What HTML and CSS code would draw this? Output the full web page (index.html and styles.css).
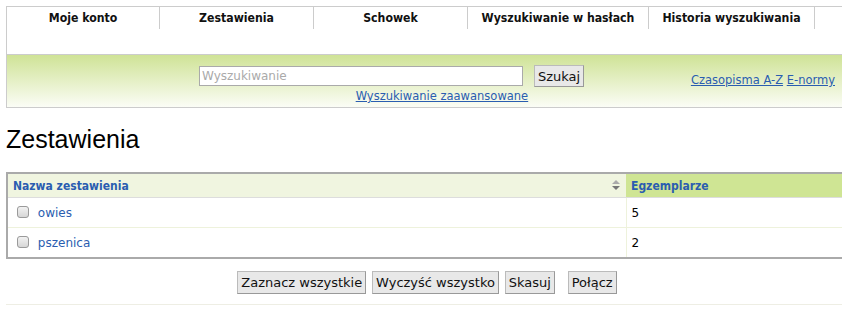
FILE: index.html
```html
<!DOCTYPE html>
<html lang="pl">
<head>
  <meta charset="UTF-8" />
  <title>Zestawienia</title>
  <link rel="stylesheet" href="styles.css">
</head>
<body>
  <div class="page">
    <div class="top">
      <ul class="menu">
        <li class="m1">Moje konto</li>
        <li class="m2">Zestawienia</li>
        <li class="m3">Schowek</li>
        <li class="m4">Wyszukiwanie w hasłach</li>
        <li class="m5">Historia wyszukiwania</li>
      </ul>
      <div class="search-band">
        <form class="search-form" onsubmit="return false">
          <div class="search-row">
            <input type="text" class="search-input" placeholder="Wyszukiwanie" />
            <button type="submit" class="btn">Szukaj</button>
          </div>
          <a href="#" class="adv-link">Wyszukiwanie zaawansowane</a>
        </form>
        <div class="extra-links">
          <a href="#">Czasopisma A-Z</a> <a href="#">E-normy</a>
        </div>
      </div>
    </div>

    <h1>Zestawienia</h1>

    <table class="lists">
      <thead>
        <tr>
          <th class="col-name">Nazwa zestawienia <span class="sort"></span></th>
          <th class="col-count">Egzemplarze</th>
        </tr>
      </thead>
      <tbody>
        <tr>
          <td><input type="checkbox" /> <a href="#">owies</a></td>
          <td>5</td>
        </tr>
        <tr>
          <td><input type="checkbox" /> <a href="#">pszenica</a></td>
          <td>2</td>
        </tr>
      </tbody>
    </table>

    <div class="actions">
      <button class="btn">Zaznacz wszystkie</button>
      <button class="btn">Wyczyść wszystko</button>
      <button class="btn">Skasuj</button>
      <button class="btn btn-gap">Połącz</button>
    </div>
    <div class="bottom-line"></div>
  </div>
</body>
</html>
```

FILE: styles.css
```css
html, body {
  margin: 0;
  overflow: hidden;
}
body {
  font-family: "DejaVu Sans", Verdana, sans-serif;
  font-size: 12px;
  color: #000;
  background: #fff;
}
a {
  color: #2a5db0;
}
.page {
  margin: 6px 0 0 6px;
  width: 842px;
}
.top {
  border: 1px solid #ccc;
  border-right: none;
}
.menu {
  list-style: none;
  margin: 0;
  padding: 0;
  display: flex;
  height: 47px;
}
.menu li {
  font-family: "DejaVu Sans Condensed", "DejaVu Sans", sans-serif;
  font-weight: bold;
  font-size: 12.2px;
  color: #111;
  text-align: center;
  height: 22px;
  line-height: 22px;
  border-right: 1px solid #ccc;
}
.m1 { width: 152px; }
.m2 { width: 153px; }
.m3 { width: 153px; }
.m4 { width: 180px; }
.m5 { width: 165px; }
.search-band {
  border-top: 1px solid #ccc;
  height: 52px;
  background: linear-gradient(#cfe396, #fbfdf6);
  display: flex;
  align-items: flex-start;
}
.search-form {
  margin: 10px 0 0 192px;
  display: flex;
  flex-direction: column;
  align-items: flex-end;
}
.search-row {
  display: flex;
  align-items: center;
}
.search-input {
  width: 318px;
  height: 18px;
  padding: 0 2px;
  border: 1px solid #aaa;
  font-family: "DejaVu Sans", sans-serif;
  font-size: 12px;
  margin: 0 10px 0 0;
}
.search-input::placeholder {
  color: #aaa;
}
.search-band .btn {
  margin-right: 0;
  height: 22px;
}
.adv-link {
  font-size: 11.5px;
  margin: 2px 56px 0 0;
}
.extra-links {
  font-size: 11.5px;
  margin: 18px 0 0 auto;
  padding-right: 13px;
}
h1 {
  font-family: "Liberation Sans", Arial, sans-serif;
  font-weight: normal;
  font-size: 25px;
  margin: 16px 0 18px 0;
  line-height: 30px;
}
.lists {
  width: 842px;
  border: 2px solid #aaa;
  border-right: none;
  border-collapse: collapse;
}
.lists th {
  text-align: left;
  color: #2a5db0;
  font-family: "DejaVu Sans Condensed", "DejaVu Sans", sans-serif;
  font-size: 12px;
  height: 23px;
  padding: 0 5px;
  border-bottom: 1px solid #ddd;
}
.col-name {
  width: 608px;
  background: #f0f5e0;
  position: relative;
}
.col-count {
  background: #cfe594;
}
.sort {
  position: absolute;
  right: 6px;
  top: 6px;
  width: 0;
  height: 0;
  border-left: 4px solid transparent;
  border-right: 4px solid transparent;
  border-bottom: 4px solid #aaa;
}
.sort::after {
  content: "";
  position: absolute;
  left: -4px;
  top: 6px;
  border-left: 4px solid transparent;
  border-right: 4px solid transparent;
  border-top: 4px solid #777;
}
.lists td {
  height: 29px;
  padding: 0 5px;
  border-bottom: 1px solid #eef2dc;
}
.lists td + td {
  border-left: 1px solid #eef2dc;
}
.lists td a {
  text-decoration: none;
}
.lists input[type=checkbox] {
  appearance: none;
  width: 12px;
  height: 12px;
  border: 1px solid #9a9a9a;
  border-radius: 3px;
  background: linear-gradient(#f2f2f2, #d6d6d6);
  margin: 0 5px 0 4px;
  vertical-align: -1px;
}
.actions {
  margin-top: 12px;
  text-align: center;
}
.btn {
  font-family: "DejaVu Sans", sans-serif;
  font-size: 13px;
  background: #e8e8e8;
  border: 1px solid #bbb;
  border-right-color: #999;
  border-bottom-color: #999;
  padding: 1px 3px;
  height: 23px;
  margin: 0 1px;
  color: #111;
}
.btn-gap {
  margin-left: 8px;
}
.bottom-line {
  margin-top: 10px;
  border-top: 1px solid #eeeee4;
}
```
